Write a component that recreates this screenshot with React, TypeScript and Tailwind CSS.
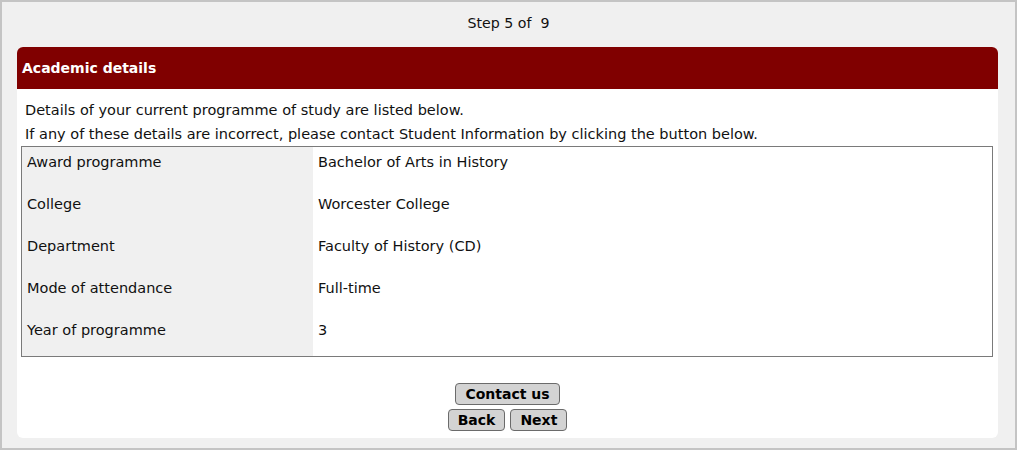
const rows = [
  { label: 'Award programme', value: 'Bachelor of Arts in History' },
  { label: 'College', value: 'Worcester College' },
  { label: 'Department', value: 'Faculty of History (CD)' },
  { label: 'Mode of attendance', value: 'Full-time' },
  { label: 'Year of programme', value: '3' },
];

function Button({ children }: { children: React.ReactNode }) {
  return (
    <button className="h-[22px] px-[9px] rounded-[4px] border border-[#6b6b6b] bg-[#d3d3d3] text-[14px] font-bold leading-none text-black">
      {children}
    </button>
  );
}

export default function App() {
  return (
    <div
      className="w-[1017px] h-[450px] border-2 border-[#c4c4c4] bg-[#f0f0f0] text-[14.5px] text-[#111] overflow-hidden"
      style={{ fontFamily: "'DejaVu Sans', Verdana, sans-serif" }}
    >
      {/* Step indicator */}
      <div className="h-[45px] flex items-center justify-center pb-[2px] text-[14.2px]">
        <span>Step 5 of&nbsp; 9</span>
      </div>

      {/* Card */}
      <div className="ml-[15px] w-[981px] h-[391px] bg-white rounded-[6px] flex flex-col">
        <div className="h-[42px] bg-[#800000] rounded-t-[6px] flex items-center px-[5px] text-white font-bold text-[14px]">
          Academic details
        </div>

        <div className="px-[4px] pt-[8px]">
          <p className="px-[4px] leading-[24px] pt-[1px]">Details of your current programme of study are listed below.</p>
          <p className="px-[4px] leading-[24px]">
            If any of these details are incorrect, please contact Student Information by clicking the button below.
          </p>

          <div className="w-[972px] border border-[#7a7a7a]">
            {rows.map((row, i) => (
              <div key={row.label} className={`flex ${i === rows.length - 1 ? 'h-[41px]' : 'h-[42px]'}`}>
                <div className="w-[291px] bg-[#f0f0f0] px-[5px] pt-[6px] leading-[18px]">{row.label}</div>
                <div className="flex-1 px-[5px] pt-[6px] leading-[18px]">{row.value}</div>
              </div>
            ))}
          </div>
        </div>

        <div className="flex flex-col items-center gap-[4px] mt-[26px]">
          <Button>Contact us</Button>
          <div className="flex gap-[5px]">
            <Button>Back</Button>
            <Button>Next</Button>
          </div>
        </div>
      </div>
    </div>
  );
}
